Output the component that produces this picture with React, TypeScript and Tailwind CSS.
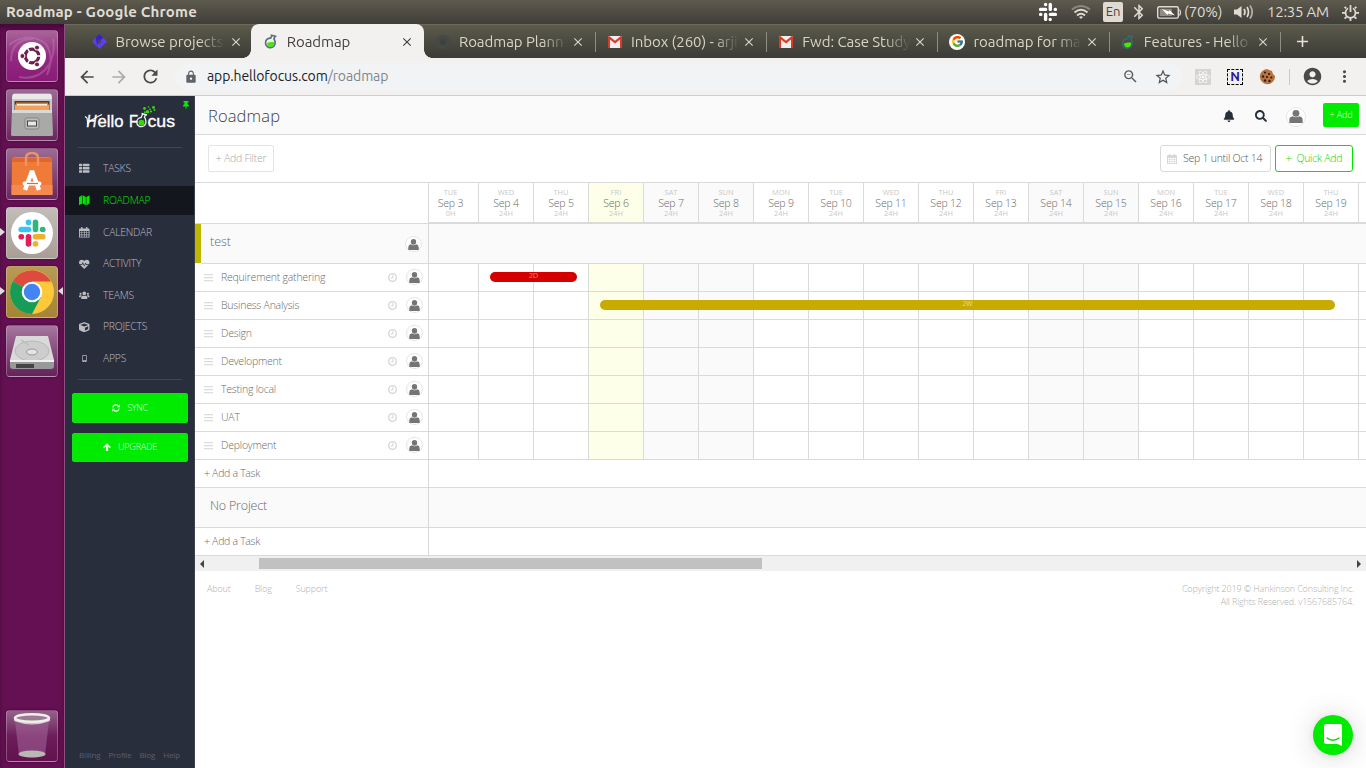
import React from "react";
import {
  FaThList, FaHeartbeat, FaUsers, FaCube, FaMobileAlt,
  FaBell, FaSearch, FaThumbtack, FaReact,
} from "react-icons/fa";
import {
  MdArrowBack, MdArrowForward, MdRefresh, MdLock, MdStarBorder, MdAccountCircle, MdMoreVert, MdClose, MdAdd, MdZoomOut, MdBluetooth,
} from "react-icons/md";
import { FcGoogle } from "react-icons/fc";

const UI = "font-['Ubuntu','Noto_Sans',sans-serif]";

function Calendar({ size = 11, className = "" }: { size?: number; className?: string }) {
  return (
    <svg className={className} width={size} height={size} viewBox="0 0 12 12" fill="currentColor">
      <path fillRule="evenodd" d="M0 2.600 Q0 1.600 1 1.600 H11 Q12 1.600 12 2.600 V12 H0Z M1 4.600 V6.200 H2.900 V4.600Z M3.600 4.600 V6.200 H5.700 V4.600Z M6.400 4.600 V6.200 H8.400 V4.600Z M9.100 4.600 V6.200 H11 V4.600Z M1 6.900 V8.700 H2.900 V6.900Z M3.600 6.900 V8.700 H5.700 V6.900Z M6.400 6.900 V8.700 H8.400 V6.900Z M9.100 6.900 V8.700 H11 V6.900Z M1 9.400 V11.100 H2.900 V9.400Z M3.600 9.400 V11.100 H5.700 V9.400Z M6.400 9.400 V11.100 H8.400 V9.400Z M9.100 9.400 V11.100 H11 V9.400Z" />
      <rect x="2.300" y="0" width="1.800" height="3.200" rx="0.800" />
      <rect x="7.900" y="0" width="1.800" height="3.200" rx="0.800" />
    </svg>
  );
}

function MapIcon({ size = 11 }: { size?: number }) {
  return (
    <svg width={size} height={size} viewBox="0 0 12 12" fill="currentColor">
      <path d="M0 2.200 L3.600 0.200 V9.800 L0 11.800Z M4.200 0.200 L7.800 2.200 V11.800 L4.200 9.800Z M8.400 2.200 L12 0.200 V9.800 L8.400 11.800Z" />
    </svg>
  );
}

function Grip() {
  return (
    <svg width="9" height="9" viewBox="0 0 9 9" fill="#dcdcdc">
      <rect y="1" width="9" height="1" /><rect y="4" width="9" height="1" /><rect y="7" width="9" height="1" />
      <path d="M0 2 H9 V2.300 H0Z M0 5 H9 V5.300 H0Z M0 8 H9 V8.300 H0Z" />
    </svg>
  );
}

function Clock({ className = "" }: { className?: string }) {
  return (
    <svg className={className} width="9" height="9" viewBox="0 0 9 9" fill="none" stroke="#d4d4d4">
      <circle cx="4.500" cy="4.500" r="3.800" strokeWidth="1.300" />
      <path d="M4.800 2 V5 H2.800" strokeWidth="1" />
    </svg>
  );
}

function Sync() {
  return (
    <svg width="8" height="8" viewBox="0 0 12 12" fill="none" stroke="currentColor" strokeWidth="1.900">
      <path d="M1.200 5 A5 5 0 0 1 9.500 2.600 M10.800 7 A5 5 0 0 1 2.500 9.400" />
      <path d="M12 0.500 V5 H7.500Z M0 11.500 V7 H4.500Z" fill="currentColor" stroke="none" />
    </svg>
  );
}

function UpArrow() {
  return (
    <svg width="8" height="8" viewBox="0 0 12 12" fill="currentColor">
      <path d="M6 0.300 L12 6.300 L10.400 7.900 L7.700 5.600 V12 H4.300 V5.600 L1.600 7.900 L0 6.300Z" />
    </svg>
  );
}

function Flask({ size, dark }: { size: number; dark?: boolean }) {
  return (
    <svg width={size} height={size} viewBox="0 0 16 16" fill="none">
      <path d="M8 4.600 A4.800 4.800 0 1 0 12 8.300 C11.900 7 11.600 6.200 11 5.400 L12 2.800" stroke={dark ? "#3d6470" : "#587079"} strokeWidth="1.700" />
      <path d="M7.600 5 L8.800 2.400 M7.600 1.400 L13.400 2.900" stroke={dark ? "#3d6470" : "#587079"} strokeWidth="1.500" />
      <path d="M4.200 9.200 Q7.500 8 10.800 8.600 A3.500 3.500 0 1 1 4.200 9.200Z" fill="#46e80c" />
    </svg>
  );
}

function Gmail() {
  return (
    <svg width="14" height="12" viewBox="0 0 14 12">
      <rect width="14" height="12" rx="1" fill="#eee" />
      <path d="M0 0.600 V12 H2 V3.600 L7 7.400 L12 3.600 V12 H14 V0.600 L12.800 0 L7 4.800 L1.200 0Z" fill="#db3a26" />
    </svg>
  );
}

function Jira() {
  return (
    <svg width="15" height="15" viewBox="0 0 15 15">
      <path d="M7.500 0 L15 7.500 L7.500 15 L0 7.500Z" fill="#5b3ff5" />
      <path d="M7.500 0 L11.200 3.700 L7.500 7.500 L3.700 3.800Z M3.700 3.800 L7.500 7.500 L5 11Z" fill="#3a1fd0" />
      <path d="M7.500 5.300 L9.700 7.500 L7.500 9.700 L5.300 7.500Z" fill="#4a493f" />
    </svg>
  );
}

function SlackMono() {
  return (
    <svg width="20" height="20" viewBox="0 0 20 20" strokeWidth="3.400" strokeLinecap="round">
      <path d="M7.600 2.400 V2.600 M7.600 7.400 H2.500 M12.300 2.500 V7.400 M17.400 7.400 H17.200 M12.400 12.400 H17.400 M12.200 17.400 V17.600 M7.600 12.400 V17.400 M2.600 12.400 H2.800" stroke="#fff" />
    </svg>
  );
}

const tabs = [
  { t: "Browse projects", icon: <Jira />, pad: "pl-[10px]", gap: "ml-[8px]" },
  { t: "Roadmap", icon: <Flask size={17} />, active: true, pad: "pl-[10px]", gap: "ml-[8px]" },
  { t: "Roadmap Plann", icon: <span className="w-[14px] h-[14px] rounded-full bg-[#464846] flex items-center justify-center"><span className="w-1.5 h-1.5 rounded-full bg-[#40413e]" /></span>, pad: "pl-[11px]", gap: "ml-[8px]" },
  { t: "Inbox (260) - arji", icon: <Gmail />, sep: true, pad: "pl-[12px]", gap: "ml-[8px]" },
  { t: "Fwd: Case Study", icon: <Gmail />, sep: true, pad: "pl-[12px]", gap: "ml-[8px]" },
  { t: "roadmap for ma", icon: <span className="w-4 h-4 rounded-full bg-white flex items-center justify-center"><FcGoogle size={13} /></span>, sep: true, pad: "pl-[12px]", gap: "ml-[8px]" },
  { t: "Features - Hello", icon: <Flask size={16} dark />, sep: true, pad: "pl-[11px]", gap: "ml-[8px]" },
];

function TopBar() {
  return (
    <div className={`h-6 flex items-center bg-linear-to-b from-[#5e5a4e] to-[#3f3e39] text-[#dfdbd2] ${UI}`}>
      <span className="pl-1.5 text-[15px] font-bold tracking-[0.180px] leading-6">Roadmap - Google Chrome</span>
      <div className="ml-auto flex items-center h-6">
        <SlackMono />
        <svg className="ml-[13px]" width="20" height="16" viewBox="0 0 20 16" fill="none" strokeWidth="2">
          <path d="M1 5.500 Q10 -1.500 19 5.500" stroke="#8a877e" />
          <path d="M3.500 8.500 Q10 3 16.500 8.500" stroke="#dfdbd2" />
          <path d="M6 11.400 Q10 8 14 11.400" stroke="#dfdbd2" />
          <path d="M8 13 L10 15 L12 13 Q10 11.600 8 13Z" fill="#dfdbd2" stroke="none" />
        </svg>
        <span className="ml-[12px] w-5 h-5 rounded-[2px] bg-[#dfdbd2] text-[#45443e] text-[13px] flex items-center justify-center">En</span>
        <MdBluetooth className="ml-[7px]" size={18} />
        <svg className="ml-[9px]" width="25" height="13" viewBox="0 0 25 13" fill="none" stroke="#dfdbd2">
          <rect x="0.700" y="0.700" width="20.600" height="11.400" rx="1.500" strokeWidth="1.400" />
          <path d="M22.500 3.500 Q24.500 6.400 22.500 9.500" strokeWidth="1.300" />
          <rect x="2.800" y="2.800" width="12" height="7.200" fill="#8f8c83" stroke="none" />
          <path d="M5 3 L12 5.600 L12.500 4 L18 9.600 L11 7.600 L10.400 9Z" fill="#fff" stroke="none" />
        </svg>
        <span className="ml-[2px] w-[41px] text-[15px] tracking-[-0.100px] whitespace-nowrap">(70%)</span>
        <svg className="ml-[9px]" width="20" height="16" viewBox="0 0 20 16" fill="none" stroke="#dfdbd2" strokeWidth="1.700">
          <path d="M0 5.500 H3 L7.500 2 V14 L3 10.500 H0Z" fill="#dfdbd2" stroke="none" />
          <path d="M10 5 Q12 8 10 11 M13 3 Q16 8 13 13" />
          <path d="M16 1.400 Q20.400 8 16 14.600" stroke="#b5b1a8" />
        </svg>
        <span className="ml-[13px] w-[63px] text-[15px] tracking-[-0.250px] whitespace-nowrap">12:35 AM</span>
        <svg className="ml-[12px] mr-[7px]" width="17" height="17" viewBox="0 0 17 17" fill="none" stroke="#dfdbd2">
          <circle cx="8.500" cy="8.800" r="5" strokeWidth="1.800" />
          <path d="M8.500 0.500 V8.500" stroke="#4d4a42" strokeWidth="4.500" />
          <path d="M8.500 1 V8" strokeWidth="1.800" />
          <path d="M14 8.800 H17 M0 8.800 H3 M8.500 14 V17 M12.500 12.800 L14.400 14.700 M4.500 12.800 L2.600 14.700 M12.800 4.400 L14.400 2.800 M4.200 4.400 L2.600 2.800" strokeWidth="1.800" />
        </svg>
      </div>
    </div>
  );
}

function Tile({ bg, children }: { bg: string; children: React.ReactNode }) {
  return (
    <div className={`relative w-[52px] h-[52px] shrink-0 rounded-[4px] border border-white/25 flex items-center justify-center shadow-[0_0_3px_rgba(0,0,0,0.45)] ${bg}`}>
      {children}
    </div>
  );
}

function Launcher() {
  return (
    <div className="w-[65px] shrink-0 bg-[#651053] border-r border-[#8d4f80] flex flex-col items-center pt-[6px] pb-[6px] gap-[7px] shadow-[inset_0_4px_4px_rgba(40,0,30,0.5)]">
      <Tile bg="bg-linear-to-b from-[#a8649a] via-[#932a80] to-[#8a1b77]">
        <svg width="50" height="50" viewBox="0 0 50 50" fill="none">
          <path d="M2 14 Q20 0 38 12 Q48 24 40 44 M4 30 Q4 8 26 8 M12 46 Q34 50 44 30 Q48 20 46 8" stroke="#c684b8" strokeOpacity="0.400" strokeWidth="2" />
          <circle cx="25" cy="25" r="14" fill="#fff" />
          <circle cx="25" cy="25" r="6.800" stroke="#6d2050" strokeWidth="3.200" />
          <path d="M25 25 L35 25 M25 25 L20 16.300 M25 25 L20 33.700" stroke="#fff" strokeWidth="1.400" />
          <g fill="#6d2050" stroke="#fff" strokeWidth="1">
            <circle cx="15.400" cy="25" r="2.500" /><circle cx="30" cy="16.600" r="2.500" /><circle cx="30" cy="33.400" r="2.500" />
          </g>
        </svg>
      </Tile>
      <Tile bg="bg-linear-to-b from-[#9b6b93] to-[#6b2560]">
        <svg width="50" height="50" viewBox="0 0 50 50">
          <path d="M5 7 Q5 3.500 8 3.500 H42 Q45 3.500 45 7 V24 H5Z" fill="#c9c9c9" />
          <path d="M6 4 H44 L45 9 H5Z" fill="#e9e9e9" />
          <rect x="7.500" y="11" width="35" height="11" fill="#493b33" />
          <rect x="9" y="12.500" width="32" height="3" fill="#e77d33" />
          <rect x="8" y="14.500" width="34" height="6" fill="#f3a05c" />
          <rect x="10" y="14" width="30" height="1.500" fill="#fff0df" />
          <path d="M5 20 H45 L46 45 Q46 46 44 46 H6 Q4 46 4 45Z" fill="#a9a9a7" />
          <path d="M5 20 H45 V23 H5Z" fill="#d9d9d7" />
          <rect x="18" y="28" width="14" height="11" rx="2" fill="#bcbcba" stroke="#858583" />
          <rect x="20.500" y="31" width="9" height="5" fill="#e8e8e8" stroke="#444" />
        </svg>
      </Tile>
      <Tile bg="bg-linear-to-b from-[#9b6b93] to-[#6b2560]">
        <svg width="50" height="50" viewBox="0 0 50 50">
          <path d="M5 9 L8 8 H42 L45 9 L45.500 45 H4.500Z" fill="#f07a38" />
          <path d="M5 9 H45 V13 H5Z" fill="#e0662b" />
          <path d="M4.500 36 H45.500 V46 H4.500Z" fill="#f58a50" />
          <path d="M19 17 V9 Q19 4 25 4 Q31 4 31 9 V17" fill="none" stroke="#ec9468" strokeWidth="2.500" />
          <path d="M18 41 L25 22 L32 41" stroke="#fff" strokeWidth="4.400" fill="none" strokeLinejoin="bevel" />
          <path d="M17.500 34.500 H32.500" stroke="#fff" strokeWidth="4" strokeLinecap="round" />
          <path d="M20 34.500 H31" stroke="#e4672e" strokeWidth="1.200" />
        </svg>
      </Tile>
      <Tile bg="bg-linear-to-b from-[#c2bdb9] to-[#a99e96]">
        <svg width="50" height="50" viewBox="0 0 50 50">
          <circle cx="25" cy="25" r="21" fill="#fff" />
          <g strokeWidth="5.600" strokeLinecap="round">
            <path d="M21.500 14.200 V14.400 M14.200 21.500 H21.500" stroke="#36c5f0" />
            <path d="M28.500 14.200 V21.500 M35.800 21.500 H35.600" stroke="#2eb67d" />
            <path d="M28.500 28.800 H35.800 M28.500 36 V35.800" stroke="#ecb22e" />
            <path d="M21.500 28.800 V36 M14.200 28.800 H14.400" stroke="#e01e5a" />
          </g>
        </svg>
        <span className="absolute -left-[7px] top-[20px] border-y-[4px] border-y-transparent border-l-[5px] border-l-[#ddd]" />
      </Tile>
      <Tile bg="bg-linear-to-b from-[#b89a56] to-[#a58434]">
        <svg width="50" height="50" viewBox="0 0 50 50">
          <circle cx="25" cy="25" r="22" fill="#fdc93a" />
          <path d="M25 25 L6 14 A22 22 0 0 1 44 14.500 H25Z" fill="#de4b3e" />
          <path d="M25 25 L6 14 A22 22 0 0 0 25 47 L34 30Z" fill="#169c57" />
          <circle cx="25" cy="25" r="10.300" fill="#fff" />
          <circle cx="25" cy="25" r="8.200" fill="#4384f0" />
        </svg>
        <span className="absolute -left-[7px] top-[20px] border-y-[4px] border-y-transparent border-l-[5px] border-l-[#ddd]" />
        <span className="absolute -right-[6px] top-[20px] border-y-[4px] border-y-transparent border-r-[5px] border-r-[#ddd]" />
      </Tile>
      <Tile bg="bg-linear-to-b from-[#a676a0] to-[#66205a]">
        <svg width="50" height="50" viewBox="0 0 50 50">
          <path d="M9 10 H41 L47 34 H3Z" fill="#d9d9d9" />
          <ellipse cx="25" cy="25" rx="17" ry="10" fill="#cdcdcd" stroke="#b9b9b9" />
          <ellipse cx="25" cy="26" rx="5.500" ry="3" fill="#e4e4e4" stroke="#999" />
          <path d="M14 14 L22 19" stroke="#c0c0c0" strokeWidth="2" />
          <path d="M3 34 H47 V40 Q47 43 44 43 H6 Q3 43 3 40Z" fill="#999" />
          <path d="M3 34 H47 V36 H3Z" fill="#f2f2f2" />
          <rect x="9" y="38" width="18" height="4" fill="#444" />
        </svg>
      </Tile>
      <div className="mt-auto">
        <Tile bg="bg-linear-to-b from-[#96608c] via-[#6d1d5a] to-[#63114f]">
          <svg width="50" height="50" viewBox="0 0 50 50">
            <path d="M8 10 L12 44 Q25 49 38 44 L42 10Z" fill="#a4689c" fillOpacity="0.550" />
            <ellipse cx="25" cy="43" rx="13.500" ry="3.600" fill="#b9b9b3" />
            <path d="M7 7 V10 Q25 17 43 10 V7Z" fill="#c8c8c0" />
            <ellipse cx="25" cy="7" rx="17" ry="3.800" fill="#9c7a95" stroke="#eeeeea" strokeWidth="2.600" />
          </svg>
        </Tile>
      </div>
    </div>
  );
}

function TabStrip() {
  return (
    <div className={`h-[34px] shrink-0 flex pl-[16.500px] bg-linear-to-b from-[#5b5a4b] to-[#3c3b37] border-t border-[#6a695a] ${UI}`}>
      {tabs.map((t) => (
        <div
          key={t.t}
          className={`relative w-[171.200px] shrink-0 flex items-center pr-[8px] ${t.pad} ${t.active ? "text-[#45403f] z-10" : "text-[#d8d5c5]"}`}
        >
          {t.active && (
            <span className="absolute -left-[2px] right-0 -top-px bottom-0 rounded-t-[8px] bg-[#f2f1f0]">
              <span className="absolute -left-2 bottom-0 w-2 h-2 bg-[radial-gradient(circle_at_0_0,transparent_7.500px,#f2f1f0_8px)]" />
              <span className="absolute -right-2 bottom-0 w-2 h-2 bg-[radial-gradient(circle_at_100%_0,transparent_7.500px,#f2f1f0_8px)]" />
            </span>
          )}
          {t.sep && <span className="absolute left-0 top-[7px] h-5 w-px bg-[#8f8e82]" />}
          <span className="relative w-4 flex justify-center">{t.icon}</span>
          <span className={`relative ${t.gap} w-[112px] -mr-[12px] overflow-hidden whitespace-nowrap tracking-[-0.050px] text-[15px] leading-[20px] [mask-image:linear-gradient(to_right,black_74%,transparent_97%)]`}>{t.t}</span>
          <MdClose className="relative ml-auto mr-[2px]" size={14} />
        </div>
      ))}
      <span className="flex items-center relative pl-[13px] text-[#e6e3d6]">
        <span className="absolute left-0 top-[7px] h-5 w-px bg-[#8f8e82]" />
        <MdAdd size={19} />
      </span>
    </div>
  );
}

function AddressBar() {
  return (
    <div className={`h-[38px] shrink-0 flex items-center bg-[#f2f1f0] border-b border-[#cfcdcb] text-[#4b4a48] ${UI}`}>
      <MdArrowBack className="ml-[12px]" size={20} />
      <MdArrowForward className="ml-[12px] text-[#adabaa]" size={20} />
      <MdRefresh className="ml-[11px]" size={21} />
      <div className="ml-[14px] w-[1007px] h-[28px] rounded-full bg-[#f1f3f4] flex items-center pl-[9px] pr-[10px]">
        <MdLock size={14} className="text-[#5f6368]" />
        <span className="ml-[9px] text-[14px] tracking-[-0.100px] text-[#202124]">app.hellofocus.com<span className="text-[#80868b]">/roadmap</span></span>
        <MdZoomOut className="ml-auto text-[#5a5d61]" size={17} />
        <MdStarBorder className="ml-[15px] text-[#4d5054]" size={18} />
      </div>
      <span className="ml-[13px] w-4 h-4 bg-[#d5d4d3] text-white flex items-center justify-center"><FaReact size={14} /></span>
      <span className="ml-[16px] w-4 h-4 border border-dashed border-black text-[13px] font-bold text-[#2a1b9a] flex items-center justify-center leading-none">N</span>
      <svg className="ml-[16px]" width="17" height="17" viewBox="0 0 17 17">
        <path d="M8 1 L10 2 L13 3 L14 6 L16 8 A7.600 7.600 0 1 1 8 1Z" fill="#b87440" />
        <g fill="#2f1a10"><circle cx="6" cy="4.500" r="1.100" /><circle cx="10" cy="6" r="1.100" /><circle cx="4" cy="8.500" r="1.200" /><circle cx="8" cy="9" r="1.100" /><circle cx="12.300" cy="9.500" r="1.100" /><circle cx="6" cy="12.500" r="1.200" /><circle cx="10.500" cy="13" r="1.200" /></g>
      </svg>
      <span className="ml-[13px] w-px h-4 bg-[#cbc9c7]" />
      <MdAccountCircle className="ml-[12px]" size={21} />
      <MdMoreVert className="ml-[12px]" size={19} />
    </div>
  );
}

const nav = [
  { t: "TASKS", I: FaThList, h: "h-[31px]" },
  { t: "ROADMAP", I: MapIcon, on: true, h: "h-[29px] mt-[2px] mb-[2px]" },
  { t: "CALENDAR", I: Calendar, h: "h-[31px]" },
  { t: "ACTIVITY", I: FaHeartbeat, h: "h-[32px]" },
  { t: "TEAMS", I: FaUsers, h: "h-[31px]" },
  { t: "PROJECTS", I: FaCube, h: "h-[32px]" },
  { t: "APPS", I: FaMobileAlt, small: true, h: "h-[31px]" },
];

function Logo() {
  return (
    <svg className="mx-auto" width="94" height="28" viewBox="0 0 94 28" fill="none">
      <g fill="#fff" stroke="#fff" strokeWidth="0.350" fontFamily="'Liberation Sans', sans-serif" fontSize="17">
        <text x="3.500" y="22.500" textLength="10" fontStyle="italic" fontSize="16" lengthAdjust="spacingAndGlyphs">H</text>
        <text x="14.500" y="22.500" textLength="26" lengthAdjust="spacingAndGlyphs">ello</text>
        <text x="46" y="22.500" textLength="9" lengthAdjust="spacingAndGlyphs">F</text>
        <text x="64.500" y="22.500" textLength="27.500" lengthAdjust="spacingAndGlyphs">cus</text>
      </g>
      <path d="M2 12.500 L4 14 L5 22 M4 20 Q9 15 19 10.500" stroke="#fff" strokeWidth="1.100" />
      <path d="M58.500 13.500 A4.600 4.600 0 1 0 62.800 17 Q62.600 14.500 61.400 13.300 L62.500 10.500 M58 13.700 L59.500 10.500 M58.500 9.500 L64 11" stroke="#e9f2ee" strokeWidth="1.300" />
      <circle cx="58.500" cy="18.800" r="3" fill="#35d60a" />
      <g fill="#35d60a">
        <circle cx="61.500" cy="4.500" r="1.400" /><circle cx="64.500" cy="7.800" r="1.800" /><circle cx="70.500" cy="3.500" r="1.400" /><circle cx="68" cy="7.500" r="1.100" /><circle cx="65.500" cy="3" r="0.800" /><circle cx="62" cy="8.200" r="1" /><circle cx="71.500" cy="6" r="1" /><circle cx="67" cy="5.300" r="0.900" />
      </g>
    </svg>
  );
}

function Sidebar() {
  return (
    <div className="w-[130px] shrink-0 bg-[#292e3c] border-r border-[#3c404c] flex flex-col relative text-[#bcbdc3]">
      <FaThumbtack size={8} className="absolute right-[4px] top-[5px] text-[#0ce60c]" />
      <div className="h-[51px] pt-[8px]"><Logo /></div>
      <div className="mx-[13px] mr-[12px] h-px bg-[#434753]" />
      <div className="pt-[5px]">
        {nav.map(({ t, I, on, small, h }) => (
          <div key={t} className={`${h} flex items-center pl-[14px] text-[10.400px] font-light ${on ? "bg-[#14161d] text-[#00e600]" : ""}`}>
            <span className="w-[11px] flex justify-center"><I size={small ? 7 : 10.500} /></span>
            <span className="ml-[13px] tracking-[-0.250px]">{t}</span>
          </div>
        ))}
      </div>
      <div className="mx-[13px] mr-[12px] mt-[5px] h-px bg-[#434753]" />
      <div className="mt-[13px] mx-[7px] mr-[6px] h-[30px] rounded-[2px] bg-[#00eb00] border border-[#1fd81f] text-[#dcffdc] text-[9px] font-light flex items-center justify-center gap-[7px] tracking-[-0.300px]">
        <Sync />SYNC
      </div>
      <div className="mt-[10px] mx-[7px] mr-[6px] h-[29px] rounded-[2px] bg-[#00eb00] border border-[#1fd81f] text-[#dcffdc] text-[9px] font-light flex items-center justify-center gap-[7px] tracking-[-0.200px] pb-px">
        <UpArrow />UPGRADE
      </div>
      <div className="mt-auto mb-[7px] pl-[14px] flex gap-[8px] text-[8px] leading-[12px] tracking-[-0.150px] text-[#5b5f6a]">
        <span>Billing</span><span>Profile</span><span>Blog</span><span>Help</span>
      </div>
    </div>
  );
}

function Avatar({ big }: { big?: boolean }) {
  return (
    <span className={`rounded-full border border-[#e6e6e6] bg-white flex items-center justify-center ${big ? "w-[20px] h-[20px]" : "w-[17px] h-[16px]"}`}>
      <svg width={big ? 14 : 11} height={big ? 13 : 11} viewBox="0 0 12 12" fill="#757575" preserveAspectRatio="none">
        <ellipse cx="6" cy="3.100" rx="2.900" ry="3.100" />
        <path d="M0.300 11.900 V9.200 Q0.300 6.200 3 5.800 Q6 7.800 9 5.800 Q11.700 6.200 11.700 9.200 V11.900Z" />
      </svg>
    </span>
  );
}

const dow = ["TUE", "WED", "THU", "FRI", "SAT", "SUN", "MON"];
const days = Array.from({ length: 17 }, (_, i) => ({ n: i + 3, d: dow[i % 7] }));
const shade = (d: { n: number; d: string }) => (d.n === 6 ? "bg-[#fdffe8]" : d.d === "SAT" || d.d === "SUN" ? "bg-[#fafafa]" : "bg-white");
const tasks = ["Requirement gathering", "Business Analysis", "Design", "Development", "Testing local", "UAT", "Deployment"];

function Roadmap() {
  return (
    <div className="border-t border-[#dadada] flex shrink-0 text-[#6a6a6a] font-light">
      <div className="w-[234px] shrink-0 border-r border-[#d8d8d8]">
        <div className="h-[41px] border-b border-[#dadada]" />
        <div className="h-[40px] flex">
          <div className="w-[6px] h-[39px] shrink-0 bg-[#bdb700]" />
          <div className="grow border-b border-[#dadada] bg-[#fafafa] flex pl-[9px] pr-[6px] text-[12.500px]">
            <span className="leading-[35px]">test</span>
            <span className="ml-auto mt-[12px]"><Avatar /></span>
          </div>
        </div>
        {tasks.map((t) => (
          <div key={t} className="h-[28px] border-b border-[#dadada] flex items-center pl-[9px] pr-[5px] text-[10.500px]">
            <Grip />
            <span className="ml-[8px] tracking-[-0.220px]">{t}</span>
            <Clock className="ml-auto" />
            <span className="ml-[9px] -mt-px"><Avatar /></span>
          </div>
        ))}
        <div className="h-[28px] border-b border-[#dadada] pl-[9px] text-[10.500px] leading-[27px] tracking-[-0.300px]">+ Add a Task</div>
        <div className="h-[40px] border-b border-[#dadada] bg-[#fafafa] pl-[15px] text-[12.500px] leading-[35px] tracking-[-0.200px]">No Project</div>
        <div className="h-[28px] border-b border-[#dadada] pl-[9px] text-[10.500px] leading-[27px] tracking-[-0.300px]">+ Add a Task</div>
      </div>
      <div className="grow overflow-hidden">
        <div className="h-[41px] flex border-b-2 border-[#dadada]">
          {days.map((d, i) => (
            <div key={d.n} className={`${i === 0 ? "w-[50px] pr-[6px]" : "w-[55px]"} shrink-0 border-r border-[#dadada] ${shade(d)} text-center`}>
              <div className="text-[7.400px] leading-[9px] pt-[5px] text-[#c8c8c8] font-normal">{d.d}</div>
              <div className="text-[10.500px] leading-[12px] whitespace-nowrap tracking-[-0.200px]">Sep {d.n}</div>
              <div className="text-[7.400px] leading-[9px] text-[#c8c8c8] font-normal">{i === 0 ? "0H" : "24H"}</div>
            </div>
          ))}
        </div>
        <div className="h-[40px] border-b border-[#dadada] bg-[#fafafa]" />
        {tasks.map((t, r) => (
          <div key={t} className="relative h-[28px] flex border-b border-[#dadada]">
            {days.map((d, i) => (
              <div key={d.n} className={`${i === 0 ? "w-[50px]" : "w-[55px]"} shrink-0 border-r border-[#dadada] ${shade(d)}`} />
            ))}
            {r === 0 && <div className="absolute left-[61px] top-[8px] w-[87px] h-[10px] rounded-full bg-[#d40000] text-[7px] leading-[8px] text-center text-white/80">2D</div>}
            {r === 1 && <div className="absolute left-[171px] top-[8px] w-[735px] h-[10px] rounded-full bg-[#c9aa00] text-[7px] leading-[8px] text-center text-white/80">2W</div>}
          </div>
        ))}
        <div className="h-[28px] border-b border-[#dadada]" />
        <div className="h-[40px] border-b border-[#dadada] bg-[#fafafa]" />
        <div className="h-[28px] border-b border-[#dadada]" />
      </div>
    </div>
  );
}

export default function App() {
  return (
    <div className="w-[1366px] h-[768px] overflow-hidden flex flex-col font-['Open_Sans',sans-serif] bg-white">
      <TopBar />
      <div className="flex grow min-h-0">
        <Launcher />
        <div className="grow min-w-0 flex flex-col">
          <TabStrip />
          <AddressBar />
          <div className="flex grow min-h-0">
            <Sidebar />
            <div className="grow min-w-0 flex flex-col relative">
              <div className="h-[39px] shrink-0 bg-[#fafafa] border-b border-[#dadada] flex items-center pl-[13px] pr-[7px] text-[#292e3c]">
                <span className="text-[16.500px] font-light text-[#3c404c] tracking-[0.130px] pt-[2px]">Roadmap</span>
                <FaBell size={12} className="ml-auto mt-px" />
                <FaSearch size={12} className="ml-[20px] mt-px" />
                <span className="ml-[19px] mr-px mt-[3px]"><Avatar big /></span>
                <span className="ml-[16px] w-[36px] h-[24px] -mt-px rounded-[2px] bg-[#00eb00] text-[#dcffdc] text-[9px] font-light flex items-center justify-center tracking-[-0.150px]">+ Add</span>
              </div>
              <div className="h-[47px] shrink-0 flex items-center pl-[13px] pr-[13px] font-light text-[10.500px] tracking-[-0.250px]">
                <span className="w-[66px] h-[27px] rounded-[2px] border border-[#e4e4e4] text-[#a8a8a8] flex items-center justify-center">+ Add Filter</span>
                <span className="ml-auto w-[111px] h-[27px] rounded-[3px] border border-[#dadada] text-[#555] flex items-center pl-[6px]">
                  <Calendar size={10} className="text-[#d4d4d4]" /><span className="ml-[6px] whitespace-nowrap">Sep 1 until Oct 14</span>
                </span>
                <span className="ml-[4px] w-[78px] h-[27px] rounded-[3px] border border-[#00e600] text-[#00d800] flex items-center justify-center gap-[5px]"><span>+</span>Quick Add</span>
              </div>
              <Roadmap />
              <div className="h-[15px] shrink-0 bg-[#f0f0f0] flex items-center pl-[5px] pr-[5px]">
                <span className="border-y-[4px] border-y-transparent border-r-[4px] border-r-[#444]" />
                <span className="ml-[55px] w-[503px] h-[11px] bg-[#c1c1c1]" />
                <span className="ml-auto border-y-[4px] border-y-transparent border-l-[4px] border-l-[#444]" />
              </div>
              <div className="flex pl-[12px] pr-[12px] pt-[11px] text-[9px] leading-[13px] font-light text-[#b0b0b0] tracking-[-0.150px]">
                <span>About</span><span className="ml-[24px]">Blog</span><span className="ml-[24px]">Support</span>
                <span className="ml-auto text-right">Copyright 2019 © Hankinson Consulting Inc.<br />All Rights Reserved. v1567685764.</span>
              </div>
              <div className="absolute right-[13px] bottom-[13px] w-[40px] h-[40px] rounded-full bg-[#00eb00] shadow-[0_1px_6px_rgba(0,0,0,0.1),0_2px_30px_rgba(0,0,0,0.16)] flex items-center justify-center">
                <svg width="18" height="22" viewBox="0 0 18 22">
                  <path d="M2 0 H16 Q18 0 18 2 V22 L13.500 20 H2 Q0 20 0 18 V2 Q0 0 2 0Z" fill="#fff" />
                  <path d="M3 14 Q9 18.500 15 14" fill="none" stroke="#00d800" strokeWidth="1.300" strokeLinecap="round" />
                </svg>
              </div>
            </div>
          </div>
        </div>
      </div>
    </div>
  );
}
